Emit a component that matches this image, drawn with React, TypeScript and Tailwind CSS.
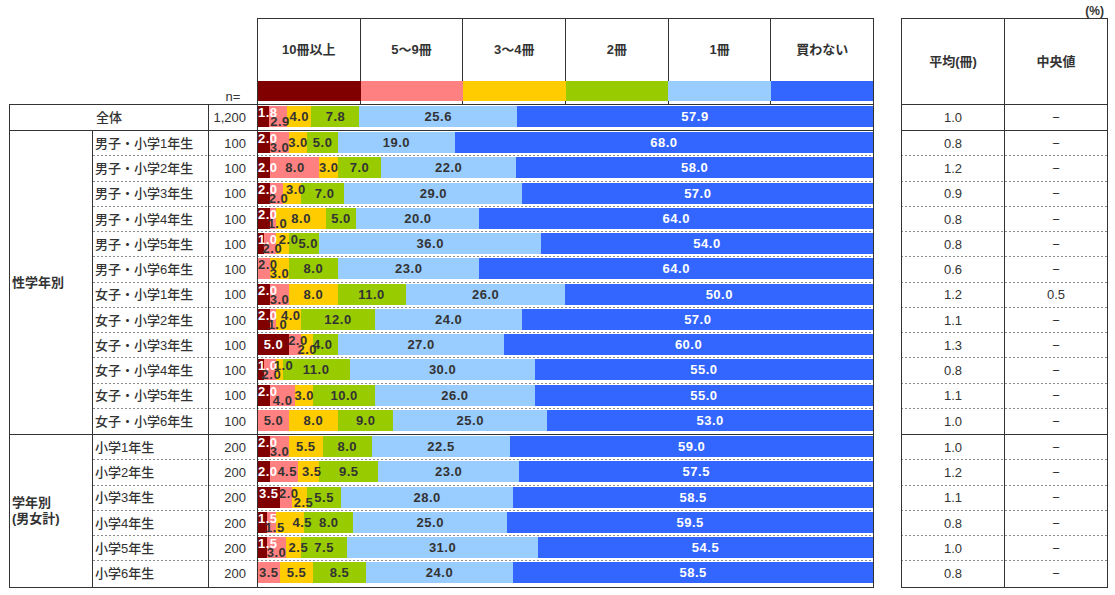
import React from 'react';

const SEG_BG = ['bg-[#800000]', 'bg-[#ff8080]', 'bg-[#ffcc00]', 'bg-[#99cc00]', 'bg-[#99ccff]', 'bg-[#3366ff]'];
const HEADS = ['10冊以上', '5～9冊', '3～4冊', '2冊', '1冊', '買わない'];
const CHART_W = 615;

type Row = {
  label: string;
  n: string;
  v: number[];
  pos?: string;
  dx?: number[];
  mean: string;
  median?: string;
};

const ALL: Row = { label: '全体', n: '1,200', v: [1.8, 2.9, 4.0, 7.8, 25.6, 57.9], pos: 'udcccc', dx: [0, 2, 0, 0, 0, 0], mean: '1.0' };

const BY_SEX: Row[] = [
  { label: '男子・小学1年生', n: '100', v: [2, 3, 3, 5, 19, 68], pos: 'udcccc', mean: '0.8' },
  { label: '男子・小学2年生', n: '100', v: [2, 8, 3, 7, 22, 58], mean: '1.2' },
  { label: '男子・小学3年生', n: '100', v: [2, 2, 3, 7, 29, 57], pos: 'uduccc', dx: [0, 2, 4, 2, 0, 0], mean: '0.9' },
  { label: '男子・小学4年生', n: '100', v: [2, 1, 8, 5, 20, 64], pos: 'udcccc', dx: [0, 4, 0, 0, 0, 0], mean: '0.8' },
  { label: '男子・小学5年生', n: '100', v: [1, 2, 2, 5, 36, 54], pos: 'uduccc', dx: [0, 2, 6, 4, 0, 0], mean: '0.8' },
  { label: '男子・小学6年生', n: '100', v: [0, 2, 3, 8, 23, 64], pos: 'cudccc', mean: '0.6' },
  { label: '女子・小学1年生', n: '100', v: [2, 3, 8, 11, 26, 50], pos: 'udcccc', mean: '1.2', median: '0.5' },
  { label: '女子・小学2年生', n: '100', v: [2, 1, 4, 12, 24, 57], pos: 'uduccc', dx: [0, 4, 2, 0, 0, 0], mean: '1.1' },
  { label: '女子・小学3年生', n: '100', v: [5, 2, 2, 4, 27, 60], pos: 'cudccc', dx: [0, 3, 0, -3, 0, 0], mean: '1.3' },
  { label: '女子・小学4年生', n: '100', v: [1, 2, 1, 11, 30, 55], pos: 'uduccc', dx: [0, 1, 4, 0, 0, 0], mean: '0.8' },
  { label: '女子・小学5年生', n: '100', v: [2, 4, 3, 10, 26, 55], pos: 'udcccc', mean: '1.1' },
  { label: '女子・小学6年生', n: '100', v: [0, 5, 8, 9, 25, 53], mean: '1.0' },
];

const BY_GRADE: Row[] = [
  { label: '小学1年生', n: '200', v: [2, 3, 5.5, 8, 22.5, 59], pos: 'udcccc', mean: '1.0' },
  { label: '小学2年生', n: '200', v: [2, 4.5, 3.5, 9.5, 23, 57.5], dx: [0, 3, 3, 0, 0, 0], mean: '1.2' },
  { label: '小学3年生', n: '200', v: [3.5, 2, 2.5, 5.5, 28, 58.5], pos: 'uudccc', dx: [0, 3, 4, 0, 0, 0], mean: '1.1' },
  { label: '小学4年生', n: '200', v: [1.5, 1.5, 4.5, 8, 25, 59.5], pos: 'udcccc', dx: [0, 3, 12, 0, 0, 0], mean: '0.8' },
  { label: '小学5年生', n: '200', v: [1.5, 3, 2.5, 7.5, 31, 54.5], pos: 'udcccc', dx: [0, 0, 5, 0, 0, 0], mean: '1.0' },
  { label: '小学6年生', n: '200', v: [0, 3.5, 5.5, 8.5, 24, 58.5], mean: '0.8' },
];

const DASH =
  'bg-[repeating-linear-gradient(to_right,#8a8a8a_0_2px,transparent_2px_4px)] bg-[length:100%_1px] bg-bottom bg-no-repeat';

function textWidth(t: string) {
  return t.split('').reduce((w, c) => w + (c === '.' ? 4.1 : 7.7), 0);
}

function Bar({ row }: { row: Row }) {
  let acc = 0;
  const segs = row.v.map((v, i) => {
    const start = acc;
    acc += v;
    return { v, i, start };
  });

  return (
    <div className="relative mt-[1px] flex h-[21px] w-[615px]">
      {segs.map((s) => (
        <div key={s.i} className={`h-full ${SEG_BG[s.i]}`} style={{ width: `${(s.v / 100) * CHART_W}px` }} />
      ))}
      {segs
        .filter((s) => s.v > 0)
        .map((s) => {
          const text = s.v.toFixed(1);
          const cx = ((s.start + s.v / 2) / 100) * CHART_W + (row.dx?.[s.i] ?? 0);
          const left = Math.max(0, cx - textWidth(text) / 2);
          const p = row.pos?.[s.i] ?? 'c';
          const dy = p === 'u' ? -4 : p === 'd' ? 5 : 0;
          return (
            <span
              key={`l${s.i}`}
              className={`absolute whitespace-nowrap text-[13px] font-bold leading-[13px] tracking-[0.5px] ${
                s.i === 0 || s.i === 5 ? 'text-white' : 'text-[#333]'
              }`}
              style={{ left: `${left}px`, top: `${4 + dy}px` }}
            >
              {text}
            </span>
          );
        })}
    </div>
  );
}

function DataRow({ row, last }: { row: Row; last: boolean }) {
  return (
    <div className={`flex h-[25.25px] ${last ? '' : DASH}`}>
      <div className="flex w-[116px] items-center border-r border-[#333] pl-[2px] font-medium">{row.label}</div>
      <div className="flex w-[49px] items-center justify-end border-r border-[#333] pr-[11px]">{row.n}</div>
      <div className="w-[616px] border-r border-[#333]">
        <Bar row={row} />
      </div>
    </div>
  );
}

function StatRow({ row, last, h }: { row: Row; last: boolean; h: string }) {
  return (
    <div className={`flex ${h} ${last ? '' : DASH}`}>
      <div className="flex w-[104px] items-center justify-center border-x border-[#333]">{row.mean}</div>
      <div className="flex w-[103px] items-center justify-center border-r border-[#333]">{row.median ?? '−'}</div>
    </div>
  );
}

export default function App() {
  return (
    <div className="flex h-[595px] w-[1115px] bg-white font-['Liberation_Sans','Noto_Sans_CJK_JP',sans-serif] text-[13px] text-[#333]">
      {/* chart table */}
      <div className="ml-[9px] w-[865px] pt-[18px]">
        <div className="flex h-[86px]">
          <div className="w-[200px]" />
          <div className="flex w-[48px] items-end justify-center pb-[1px] leading-none">n=</div>
          <div className="flex w-[617px] flex-col border-x border-t border-[#333]">
            <div className="flex h-[62px]">
              {HEADS.map((h, i) => (
                <div
                  key={h}
                  className={`flex flex-1 items-center justify-center font-bold ${i < 5 ? 'border-r border-[#333]' : ''}`}
                >
                  {h}
                </div>
              ))}
            </div>
            <div className="flex h-[20px]">
              {SEG_BG.map((c) => (
                <div key={c} className={`flex-1 ${c}`} />
              ))}
            </div>
            <div className="flex h-[3px]">
              {HEADS.map((h, i) => (
                <div key={h} className={`flex-1 ${i < 5 ? 'border-r border-[#333]' : ''}`} />
              ))}
            </div>
          </div>
        </div>

        <div className="border-t border-[#333]">
          <div className="flex h-[26px] border-b border-[#333]">
            <div className="flex w-[200px] items-center justify-center border-x border-[#333] font-medium">{ALL.label}</div>
            <div className="flex w-[49px] items-center justify-end border-r border-[#333] pr-[11px]">{ALL.n}</div>
            <div className="w-[616px] border-r border-[#333]">
              <Bar row={ALL} />
            </div>
          </div>

          <div className="flex border-b border-[#333]">
            <div className="flex w-[84px] items-center border-x border-[#333] pl-[2px] font-bold">性学年別</div>
            <div className="flex flex-col">
              {BY_SEX.map((r, i) => (
                <DataRow key={r.label} row={r} last={i === BY_SEX.length - 1} />
              ))}
            </div>
          </div>

          <div className="flex border-b border-[#333]">
            <div className="flex w-[84px] items-center border-x border-[#333] pl-[2px] font-bold leading-[16px]">
              学年別
              <br />
              (男女計)
            </div>
            <div className="flex flex-col">
              {BY_GRADE.map((r, i) => (
                <DataRow key={r.label} row={r} last={i === BY_GRADE.length - 1} />
              ))}
            </div>
          </div>
        </div>
      </div>

      {/* mean / median table */}
      <div className="ml-[27px] w-[207px]">
        <div className="h-[18px] pr-[4px] pt-[5px] text-right text-[12px] font-bold leading-none">(%)</div>
        <div className="flex h-[86px] border-t border-[#333]">
          <div className="flex w-[104px] items-center justify-center border-x border-[#333] font-bold">平均(冊)</div>
          <div className="flex w-[103px] items-center justify-center border-r border-[#333] font-bold">中央値</div>
        </div>
        <div className="border-t border-[#333]">
          <div className="border-b border-[#333]">
            <StatRow row={ALL} last h="h-[25px]" />
          </div>
          <div className="border-b border-[#333]">
            {BY_SEX.map((r, i) => (
              <StatRow key={r.label} row={r} last={i === BY_SEX.length - 1} h="h-[25.25px]" />
            ))}
          </div>
          <div className="border-b border-[#333]">
            {BY_GRADE.map((r, i) => (
              <StatRow key={r.label} row={r} last={i === BY_GRADE.length - 1} h="h-[25.25px]" />
            ))}
          </div>
        </div>
      </div>
    </div>
  );
}
